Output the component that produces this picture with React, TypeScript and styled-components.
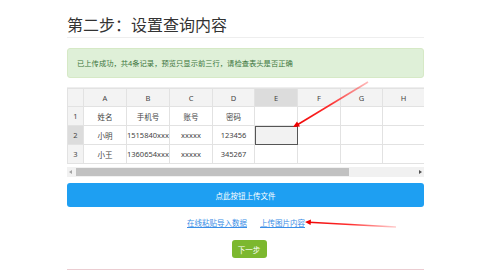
import React from 'react';
import styled, { createGlobalStyle } from 'styled-components';

const GlobalStyle = createGlobalStyle`
  html, body {
    margin: 0;
    padding: 0;
    background: #fff;
    font-family: "Noto Sans", "Noto Sans CJK SC", sans-serif;
    color: #333;
  }
`;

const Page = styled.div`
  position: relative;
  width: 500px;
  height: 270px;
  overflow: hidden;
`;

const Container = styled.div`
  width: 357px;
  margin-left: 67px;
  display: flex;
  flex-direction: column;
`;

const Title = styled.h2`
  margin: 0;
  padding-top: 13px;
  height: 24px;
  font-size: 16px;
  line-height: 24px;
  font-weight: 400;
  color: #333;
  border-bottom: 1px solid #eee;
`;

const Alert = styled.div`
  margin-top: 10px;
  height: 28px;
  display: flex;
  align-items: center;
  padding-left: 9px;
  background: #dff0d8;
  border: 1px solid #d6e9c6;
  border-radius: 3px;
  color: #3c763d;
  font-size: 7.3px;
`;

const Divider = styled.div`
  margin-top: 9px;
  border-top: 1px solid #eee;
`;

const GridWrap = styled.div`
  width: 357px;
  overflow: hidden;
`;

const Grid = styled.table`
  border-collapse: collapse;
  table-layout: fixed;
  width: 357px;
  font-size: 7.5px;
`;

const Col = styled.col<{ $w: number }>`
  width: ${p => p.$w}px;
`;

const HeadCell = styled.th<{ $active?: boolean }>`
  height: 17px;
  padding: 0;
  border: 1px solid #e2e2e2;
  background: ${p => (p.$active ? '#dcdcdc' : '#f3f3f3')};
  font-weight: 400;
  color: #444;
  text-align: center;
`;

const RowHead = styled.td<{ $active?: boolean }>`
  height: 18px;
  padding: 0;
  border: 1px solid #e2e2e2;
  background: ${p => (p.$active ? '#dcdcdc' : '#f3f3f3')};
  color: #444;
  text-align: center;
`;

const Cell = styled.td<{ $selected?: boolean }>`
  height: 18px;
  padding: 0;
  border: 1px solid #e2e2e2;
  text-align: center;
  white-space: nowrap;
  overflow: hidden;
  color: #444;
  background: ${p => (p.$selected ? '#f2f2f2' : '#fff')};
  ${p => p.$selected && 'outline: 1.5px solid #555; outline-offset: -1.5px;'}
`;

const ScrollBar = styled.div`
  margin-top: 3px;
  height: 10px;
  background: #f1f1f1;
  display: flex;
  align-items: center;
  justify-content: space-between;
  padding: 0 2px;
  gap: 4px;
`;

const ScrollArrow = styled.span<{ $dir: 'left' | 'right' }>`
  width: 0;
  height: 0;
  border-top: 2.5px solid transparent;
  border-bottom: 2.5px solid transparent;
  ${p =>
    p.$dir === 'left'
      ? 'border-right: 3px solid #a3a3a3;'
      : 'border-left: 3px solid #505050;'}
`;

const ScrollTrack = styled.div`
  flex: 1;
  height: 8px;
  display: flex;
`;

const ScrollThumb = styled.div`
  width: 273px;
  height: 8px;
  background: #c1c1c1;
`;

const UploadButton = styled.button`
  margin-top: 6px;
  height: 24px;
  border: none;
  border-radius: 3px;
  background: #1e9ff2;
  color: #fff;
  font-family: inherit;
  font-size: 7.5px;
  cursor: pointer;
`;

const Links = styled.div`
  margin-top: 10px;
  display: flex;
  justify-content: center;
  gap: 13px;
  padding-left: 1px;
  font-size: 7.5px;
  line-height: 12px;
`;

const Link = styled.a`
  color: #3a8ee6;
  text-decoration: underline;
  cursor: pointer;
`;

const NextRow = styled.div`
  margin-top: 11px;
  display: flex;
  justify-content: center;
  padding-left: 7px;
`;

const NextButton = styled.button`
  width: 35px;
  height: 18px;
  border: none;
  border-radius: 3px;
  background: #7cb82f;
  color: #fff;
  font-family: inherit;
  font-size: 7.5px;
  padding: 0;
`;

const DangerBox = styled.div`
  margin-top: 11px;
  height: 20px;
  background: #f2dede;
  border-top: 1px solid #ebccd1;
`;

const Overlay = styled.svg`
  position: absolute;
  left: 0;
  top: 0;
  pointer-events: none;
`;

const columns = ['A', 'B', 'C', 'D', 'E', 'F', 'G', 'H'];
const widths = [43, 43, 43, 42, 43, 43, 42, 42];

const rows = [
  ['姓名', '手机号', '账号', '密码'],
  ['小明', '1515840xxxx', 'xxxxx', '123456'],
  ['小王', '1360654xxxx', 'xxxxx', '345267'],
];

const App: React.FC = () => {
  return (
    <Page>
      <GlobalStyle />
      <Container>
        <Title>第二步：设置查询内容</Title>
        <Alert>已上传成功，共4条记录，预览只显示前三行，请检查表头是否正确</Alert>
        <Divider />
        <GridWrap>
          <Grid>
            <colgroup>
              <Col $w={16} />
              {widths.map((w, i) => (
                <Col key={i} $w={w} />
              ))}
            </colgroup>
            <thead>
              <tr>
                <HeadCell />
                {columns.map(c => (
                  <HeadCell key={c} $active={c === 'E'}>
                    {c}
                  </HeadCell>
                ))}
              </tr>
            </thead>
            <tbody>
              {rows.map((row, r) => (
                <tr key={r}>
                  <RowHead $active={r === 1}>{r + 1}</RowHead>
                  {columns.map((c, i) => (
                    <Cell key={c} $selected={r === 1 && c === 'E'}>
                      {row[i] ?? ''}
                    </Cell>
                  ))}
                </tr>
              ))}
            </tbody>
          </Grid>
        </GridWrap>
        <ScrollBar>
          <ScrollArrow $dir="left" />
          <ScrollTrack>
            <ScrollThumb />
          </ScrollTrack>
          <ScrollArrow $dir="right" />
        </ScrollBar>
        <UploadButton>点此按钮上传文件</UploadButton>
        <Links>
          <Link>在线粘贴导入数据</Link>
          <Link>上传图片内容</Link>
        </Links>
        <NextRow>
          <NextButton>下一步</NextButton>
        </NextRow>
        <DangerBox />
      </Container>

      {/* red annotation arrows drawn over the page */}
      <Overlay width="500" height="270" viewBox="0 0 500 270">
        <defs>
          <linearGradient id="fadeA" x1="368" y1="82" x2="293" y2="127" gradientUnits="userSpaceOnUse">
            <stop offset="0" stopColor="#ff3b3b" stopOpacity="0.35" />
            <stop offset="0.5" stopColor="#ff1a1a" stopOpacity="0.9" />
            <stop offset="1" stopColor="#ee0000" />
          </linearGradient>
          <linearGradient id="fadeB" x1="396" y1="227" x2="305" y2="222" gradientUnits="userSpaceOnUse">
            <stop offset="0" stopColor="#ff3b3b" stopOpacity="0.25" />
            <stop offset="0.5" stopColor="#ff1a1a" stopOpacity="0.9" />
            <stop offset="1" stopColor="#ee0000" />
          </linearGradient>
        </defs>
        <line x1="368" y1="82" x2="297" y2="125" stroke="url(#fadeA)" strokeWidth="1.6" />
        <polygon points="293,127 297,121.5 300,126.5" fill="#ee0000" />
        <line x1="396" y1="227" x2="309" y2="222.3" stroke="url(#fadeB)" strokeWidth="1.6" />
        <polygon points="305,222 311,219.5 310.6,225" fill="#ee0000" />
      </Overlay>
    </Page>
  );
};

export default App;
